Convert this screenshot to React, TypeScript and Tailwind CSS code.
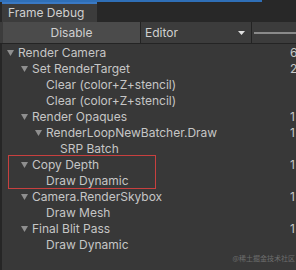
import React from "react";

type Row = { label: string; level: number; arrow: boolean; num?: string };

const rows: Row[] = [
  { label: "Render Camera", level: 0, arrow: true, num: "6" },
  { label: "Set RenderTarget", level: 1, arrow: true, num: "2" },
  { label: "Clear (color+Z+stencil)", level: 2, arrow: false },
  { label: "Clear (color+Z+stencil)", level: 2, arrow: false },
  { label: "Render Opaques", level: 1, arrow: true, num: "1" },
  { label: "RenderLoopNewBatcher.Draw", level: 2, arrow: true, num: "1" },
  { label: "SRP Batch", level: 3, arrow: false },
  { label: "Copy Depth", level: 1, arrow: true, num: "1" },
  { label: "Draw Dynamic", level: 2, arrow: false },
  { label: "Camera.RenderSkybox", level: 1, arrow: true, num: "1" },
  { label: "Draw Mesh", level: 2, arrow: false },
  { label: "Final Blit Pass", level: 1, arrow: true, num: "1" },
  { label: "Draw Dynamic", level: 2, arrow: false },
];

const pad: Record<number, string> = {
  0: "pl-[16px]",
  1: "pl-[30px]",
  2: "pl-[44px]",
  3: "pl-[58px]",
};

function Arrow() {
  return (
    <svg width="7" height="6" viewBox="0 0 7 6" className="absolute left-[-11px] top-[5px]">
      <polygon points="0,0 7,0 3.5,6" fill="#8f8f8f" />
    </svg>
  );
}

export default function App() {
  return (
    <div className="relative w-[296px] h-[270px] overflow-hidden bg-[#383838] font-['Inter',sans-serif] text-[12px] text-[#c6c6c6]">
      {/* tab bar */}
      <div className="relative h-[22px] bg-[#282828] flex items-end">
        <div className="absolute left-0 top-0 h-[2px] w-[262px] bg-[#2f6fb7]" />
        <div className="ml-[2px] w-[95px] h-[20px] bg-[#3c3c3c] border-t-2 border-[#3a79c4] flex items-center pl-[6px] text-[#d0d0d0]">
          Frame Debug
        </div>
      </div>
      {/* toolbar */}
      <div className="h-[22px] bg-[#3c3c3c] border-b border-[#242424] flex items-stretch">
        <div className="ml-[3px] w-[137px] bg-[#4b4b4b] flex items-center justify-center text-[#d0d0d0]">
          Disable
        </div>
        <div className="w-px bg-[#232323]" />
        <div className="w-[110px] flex items-center pl-[4px] pr-[6px] text-[#d0d0d0]">
          <span className="flex-1">Editor</span>
          <svg width="7" height="4" viewBox="0 0 7 4">
            <polygon points="0,0 7,0 3.5,4" fill="#e0e0e0" />
          </svg>
        </div>
        <div className="w-px bg-[#232323]" />
        <div className="flex-1 flex items-center pl-[2px]">
          <div className="h-[2px] w-full bg-[#8a8a8a]" />
        </div>
      </div>
      {/* tree */}
      <div className="flex flex-col pt-px border-l-2 border-[#262626] h-full">
        {rows.map((r, i) => (
          <div key={i} className="h-[16px] flex items-center whitespace-nowrap">
            <div className={`${pad[r.level]} flex-1 min-w-0`}>
              <span className="relative">
                {r.arrow && <Arrow />}
                {r.label}
              </span>
            </div>
            <span className="w-[6px] overflow-hidden shrink-0">{r.num ?? ""}</span>
          </div>
        ))}
      </div>
      {/* annotation */}
      <div className="absolute left-[8px] top-[155px] w-[148px] h-[34px] border border-[#c8403f]" />
      {/* watermark */}
      <div className="absolute right-[1px] top-[253px] text-[7px] leading-[10px] text-[#6d6d6d] font-['Noto_Sans_CJK_SC',sans-serif]">
        @稀土掘金技术社区
      </div>
    </div>
  );
}
